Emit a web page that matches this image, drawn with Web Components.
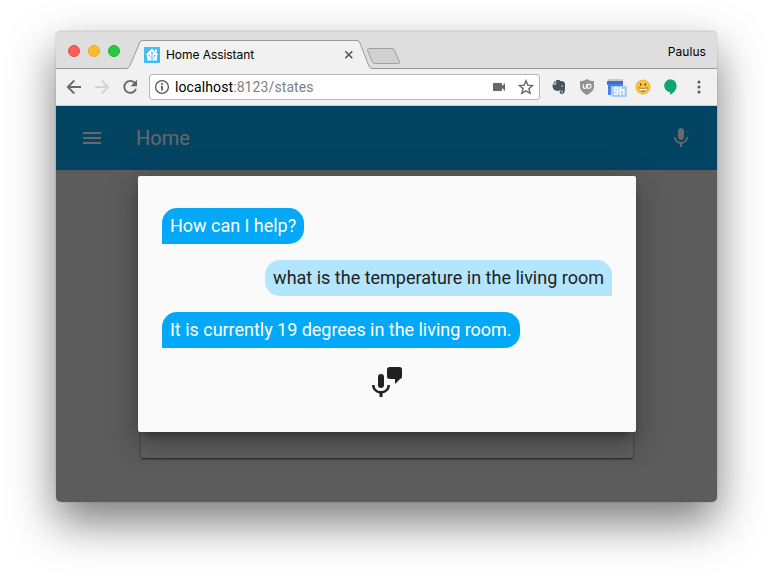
<!DOCTYPE html>
<html lang="en"><head><meta charset="utf-8"><title>Home Assistant</title>
<style>
html,body{margin:0;width:773px;height:582px;overflow:hidden;background:#fff}
body{font-family:Roboto,sans-serif;box-sizing:border-box;padding:31px 56px 80px}
</style></head><body>
<browser-window>
  <tab-strip slot="chrome"></tab-strip>
  <nav-toolbar slot="chrome"></nav-toolbar>
  <home-panel>
    <voice-dialog>
      <chat-bubble>How can I help?</chat-bubble>
      <chat-bubble user>what is the temperature in the living room</chat-bubble>
      <chat-bubble>It is currently 19 degrees in the living room.</chat-bubble>
    </voice-dialog>
  </home-panel>
</browser-window>
<script>
function define(name, html){
  const t=document.createElement('template'); t.innerHTML=html;
  customElements.define(name, class extends HTMLElement{
    constructor(){super();this.attachShadow({mode:'open'}).append(t.content.cloneNode(true));}
  });
}
define('browser-window',`<style>
:host{display:flex;flex-direction:column;width:661px;height:471px;border-radius:5px;box-shadow:0 0 1px rgba(0,0,0,.6),0 20px 45px rgba(0,0,0,.52)}
.clip{display:flex;flex-direction:column;height:471px;border-radius:5px;overflow:hidden}
</style><div class="clip"><slot name="chrome"></slot><slot></slot></div>`);

define('tab-strip',`<style>
:host{display:flex;height:38px;background:#dedede;position:relative;box-sizing:border-box;border-top:1px solid #d2d2d2;font:12px/16px Inter,sans-serif;color:#000}
.shape{position:absolute;left:0;top:-1px}
.lights{display:flex;gap:8px;padding:13px 0 0 12px;position:relative}
.lights i{width:12px;height:12px;box-sizing:border-box;border-radius:50%}
.tab{display:flex;align-items:center;position:relative;margin:14px 0 0 24px;height:18px;width:211px;letter-spacing:-.06px}
.tab svg:first-child{margin-right:6px}
.tab svg:last-child{margin-left:auto}
.who{margin:12px 11px 0 auto;position:relative;letter-spacing:.05px}
</style>
<svg class="shape" width="661" height="38" viewBox="0 0 661 38"><path d="M0 37.5H71C73 37 73.5 35.500 74 34.500L84 11Q85 9.500 86 9.500H301Q303 9.500 303.500 11L313 35Q314 37.500 316 37.500H661V39H0Z" fill="#f1f1f1"/><path d="M0 37.500H71C73 37 73.500 35.500 74 34.500L84 11Q85 9.500 86 9.500H301Q303 9.500 303.500 11L313 35Q314 37.500 316 37.500H661" fill="none" stroke="#999"/><path d="M313 17.500H336Q338 17.500 338.500 19L343.500 31Q344 32.500 342 32.500H319Q317 32.500 316.500 31.500L311.500 19.500Q311 17.500 313 17.500Z" fill="#d0d0d0" stroke="#a2a2a2"/></svg>
<div class="lights"><i style="background:#fc605b;border:1px solid #eb4c47"></i><i style="background:#fdbc30;border:1px solid #e5a625"></i><i style="background:#29ca41;border:1px solid #20b336"></i></div>
<div class="tab"><svg width="16" height="16"><path fill="#41bdf5" d="M0 0h16v16H0z"/><path fill="#fff" d="M8 1.500 14.500 8H13v5.500H3V8H1.500ZM11 2.500h2V6l-2-2Z"/><path stroke="#41bdf5" stroke-width=".7" fill="none" d="M8 14V6M8 11 5.500 8.500M8 12l3-3"/><circle cx="8" cy="5.500" r=".9" fill="#41bdf5"/><circle cx="5.400" cy="8.500" r=".8" fill="#41bdf5"/><circle cx="10.700" cy="8.500" r=".8" fill="#41bdf5"/></svg><span>Home Assistant</span><svg width="12" height="12"><path d="M2.300 2.300l7 7M9.300 2.300l-7 7" stroke="#555" stroke-width="1.600"/></svg></div>
<span class="who">Paulus</span>`);

define('nav-toolbar',`<style>
:host{display:flex;align-items:center;height:37px;flex:none;box-sizing:border-box;border-bottom:1px solid #d0d0d0;background:#f1f1f1;padding:0 10px}
svg{flex:none;display:block}
.nav{display:flex;gap:12px}
.url{display:flex;align-items:center;box-sizing:border-box;width:391px;height:26px;margin-left:11px;border:1px solid #b5b5b5;border-radius:3px;background:#fff;padding:0 5px 0 4px;font:14px/20px Roboto,sans-serif;color:#808080}
.url b{font-weight:400;color:#000}.url span{margin-left:5px;letter-spacing:.1px}
.url .cam{margin-left:auto;margin-right:12px}
.ext{display:flex;margin-left:11px;gap:12px;align-items:center}
.cal{position:relative;width:18px;height:18px}
.cal em{position:absolute;left:4px;top:8px;width:16px;height:11px;background:#a9cfed;color:#fff;font:bold 10px/12px "Liberation Sans",sans-serif;text-align:center;border-radius:1px}
</style>
<div class="nav">
<svg width="16" height="16" fill="none" stroke="#686868" stroke-width="1.800"><path d="M15 8H2M8.300 1.500 1.800 8l6.500 6.500"/></svg>
<svg width="16" height="16" fill="none" stroke="#d4d4d4" stroke-width="1.800"><path d="M1 8h13M7.700 1.500 14.200 8l-6.500 6.500"/></svg>
<svg width="16" height="16"><path fill="none" stroke="#686868" stroke-width="1.900" d="M13.300 4.500A6 6 0 1 0 14 9.800"/><path fill="#686868" d="M15 .8v6.500H8.500Z"/></svg>
</div>
<div class="url"><svg width="16" height="16"><circle cx="8" cy="8" r="6.400" fill="none" stroke="#555" stroke-width="1.300"/><path d="M7.200 7h1.600v4.500H7.200zM7.200 4.300h1.600v1.600H7.200z" fill="#444"/></svg><span><b>localhost</b>:8123/states</span>
<svg class="cam" width="14" height="12"><path fill="#686868" d="M1 2h9v3l3-3v8l-3-3v3H1z"/></svg>
<svg width="16" height="16"><path d="M8 1.700 9.800 6.100l4.800.4-3.700 3.100 1.200 4.700L8 11.800l-4.100 2.500 1.200-4.700L1.400 6.500l4.800-.4Z" fill="none" stroke="#686868" stroke-width="1.400"/></svg></div>
<div class="ext">
<svg width="16" height="16"><path fill="#45535a" d="M4.500 1.500 2 4.500h2.500zM5.200 1h3.200l1 .9 3.300.6c1.300.4 1.600 3.200 1.200 7.500-.2 3.500-.9 5-3 5-2 0-2.400-1.200-2.200-2.400.2-1 1.300-1.100 2.300-.9v1.100c-.9 0-1 .3-.8.8.4.4 1.200.3 1.400-.4.300-1 .1-1.800-1.200-2l-1.900-.3-.4 1.100C7.600 12.300 5.300 12 3.700 11.300 2.500 10.700 1.500 8.700 1.400 5.500h3.800z"/><path fill="#f1f1f1" d="M10.300 7.200c.2-1.200 1.800-1.200 2 .2z"/></svg>
<svg width="16" height="18"><path d="M8 1C10.500 2.700 12.500 3 15 3v5.500c0 4-3.500 6.700-7 8.500-3.500-1.800-7-4.500-7-8.500V3c2.500 0 4.500-.3 7-2Z" fill="#929292"/><path d="M4.300 6.300v2.600a1.500 1.500 0 0 0 3 0V6.300" fill="none" stroke="#fff" stroke-width="1.100"/><path d="M8.500 6.400h1.700a1.900 1.900 0 0 1 0 3.800H8.500Z" fill="none" stroke="#fff" stroke-width="1.100"/></svg>
<div class="cal"><svg width="18" height="18"><path fill="#4c80e2" d="M0 4h16v13H1V7H0z"/><path fill="#3b6fd0" d="M0 3h16v3H0z"/><path d="M1 2h15" stroke="#c4c4c4" stroke-width="2" stroke-dasharray="3 .5"/></svg><em>9h</em></div>
<svg style="margin-left:-2px" width="16" height="16"><circle cx="8" cy="8" r="7" fill="#fdc538" stroke="#e5a129" stroke-width=".8"/><path d="M3.300 8.300Q8 9.500 12.700 8.300C12.200 14.500 3.800 14.500 3.300 8.300Z" fill="#9b6420"/><path d="M4 9.200q4 1 8 0l-.8 2.200H4.800z" fill="#fff"/><ellipse cx="5.700" cy="5.500" rx=".8" ry="1.400" fill="#7a4c19"/><ellipse cx="10.300" cy="5.500" rx=".8" ry="1.400" fill="#7a4c19"/></svg>
<svg width="16" height="18" style="margin-left:-1px;margin-right:1px"><path fill="#0da66c" d="M8 1.200a6.500 6.500 0 0 1 6.600 6.600C14.600 12 11.500 15 8 16.800v-2.500A6.600 6.600 0 0 1 8 1.200Z"/></svg>
<svg width="16" height="16" fill="#5a5a5a"><circle cx="8" cy="3" r="1.500"/><circle cx="8" cy="8" r="1.500"/><circle cx="8" cy="13" r="1.500"/></svg>
</div>`);

define('home-panel',`<style>
:host{display:block;flex:1;background:#5c5c5c;position:relative;overflow:hidden}
header{display:flex;align-items:center;height:64px;box-sizing:border-box;padding:0 24px;background:#044463;color:#696969;font:20px/24px Roboto,sans-serif}
header span{margin-left:32px;flex:1}
.card{width:492px;height:272px;margin:16px auto 0;border-radius:2px;background:#616161;box-shadow:0 1px 2px rgba(0,0,0,.65)}
::slotted(voice-dialog){position:absolute;left:82px;top:70px}
</style>
<header><svg width="24" height="24"><path fill="#696969" d="M3 18h18v-2H3v2zm0-5h18v-2H3v2zm0-7v2h18V6H3z"/></svg><span>Home</span>
<svg width="24" height="24"><path fill="#696969" d="M12 14c1.660 0 2.990-1.340 2.990-3L15 5c0-1.660-1.340-3-3-3S9 3.340 9 5v6c0 1.660 1.340 3 3 3zm5.300-3c0 3-2.540 5.100-5.300 5.100S6.700 14 6.700 11H5c0 3.410 2.720 6.230 6 6.720V21h2v-3.280c3.280-.48 6-3.300 6-6.720h-1.700z"/></svg></header>
<div class="card"></div><slot></slot>`);

define('voice-dialog',`<style>
:host{display:flex;flex-direction:column;align-items:flex-start;gap:16px;box-sizing:border-box;width:498px;height:256px;padding:32px 24px;background:#fafafa;border-radius:2px;box-shadow:0 16px 24px 2px rgba(0,0,0,.14),0 6px 30px 5px rgba(0,0,0,.12),0 8px 10px -5px rgba(0,0,0,.4)}
svg{align-self:center;display:block}
</style><slot></slot>
<svg width="36" height="36" viewBox="0 0 36 36" fill="#212121"><path d="M21 3h9.500q2.500 0 2.500 2.500v7q0 2.500-2.500 2.500H31l-5 5V15H21q-3 0-3-2.500v-7Q18 3 21 3Z"/><rect x="9" y="10" width="6" height="14" rx="3"/><path d="M3 21h2.600c0 4 3 6 6.400 6s6.400-2 6.400-6H21c0 4.500-3.400 7.700-7.500 8.400V33h-3v-3.600C6.400 28.700 3 25.500 3 21Z"/></svg>`);

define('chat-bubble',`<style>
:host{display:block;box-sizing:border-box;height:36px;padding:0 8px;border-radius:15px 15px 15px 0;background:#03a9f8;color:#fff;font:18px/36px Roboto,sans-serif;letter-spacing:-.025px;white-space:nowrap}
:host([user]){align-self:flex-end;letter-spacing:0;border-radius:15px 15px 0 15px;background:#b3e5fd;color:#212121}
</style><slot></slot>`);
</script></body></html>
